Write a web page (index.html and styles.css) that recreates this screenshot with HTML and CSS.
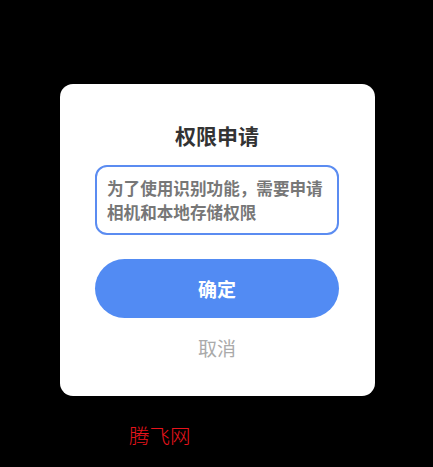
FILE: index.html
```html
<!DOCTYPE html>
<html lang="zh">
<head>
<meta charset="utf-8">
<link rel="stylesheet" href="styles.css">
</head>
<body>
<div class="dialog">
  <div class="title">权限申请</div>
  <div class="message">为了使用识别功能，需要申请相机和本地存储权限</div>
  <div class="confirm">确定</div>
  <div class="cancel">取消</div>
</div>
<div class="watermark">腾飞网</div>
</body>
</html>
```
FILE: styles.css
```css
html, body {
  margin: 0;
  padding: 0;
  background: #000;
  height: 100%;
  overflow: hidden;
}
body {
  font-family: "Noto Sans CJK SC", "Noto Sans", sans-serif;
}
.dialog {
  margin: 84px 0 0 60px;
  width: 315px;
  box-sizing: border-box;
  padding: 36px 36px 33px 35px;
  background: #fff;
  border-radius: 13px;
}
.title {
  font-size: 21px;
  font-weight: 700;
  line-height: 30px;
  height: 30px;
  color: #333;
  text-align: center;
}
.message {
  margin-top: 15px;
  height: 70px;
  box-sizing: border-box;
  border: 2px solid #5b8cf1;
  border-radius: 12px;
  padding: 8.5px 6px 0 10px;
  font-size: 16.6px;
  line-height: 24px;
  font-weight: 700;
  color: #777;
  letter-spacing: 0;
}
.confirm {
  margin-top: 24px;
  height: 59px;
  border-radius: 30px;
  background: #528bf3;
  color: #fff;
  font-size: 19px;
  font-weight: 700;
  display: flex;
  align-items: center;
  justify-content: center;
}
.cancel {
  margin-top: 15px;
  line-height: 30px;
  height: 30px;
  font-size: 19px;
  color: #aaa;
  text-align: center;
}
.watermark {
  margin: 27px 0 0 129px;
  font-size: 20.5px;
  line-height: 24px;
  color: #e8141c;
  font-weight: 300;
}
```
